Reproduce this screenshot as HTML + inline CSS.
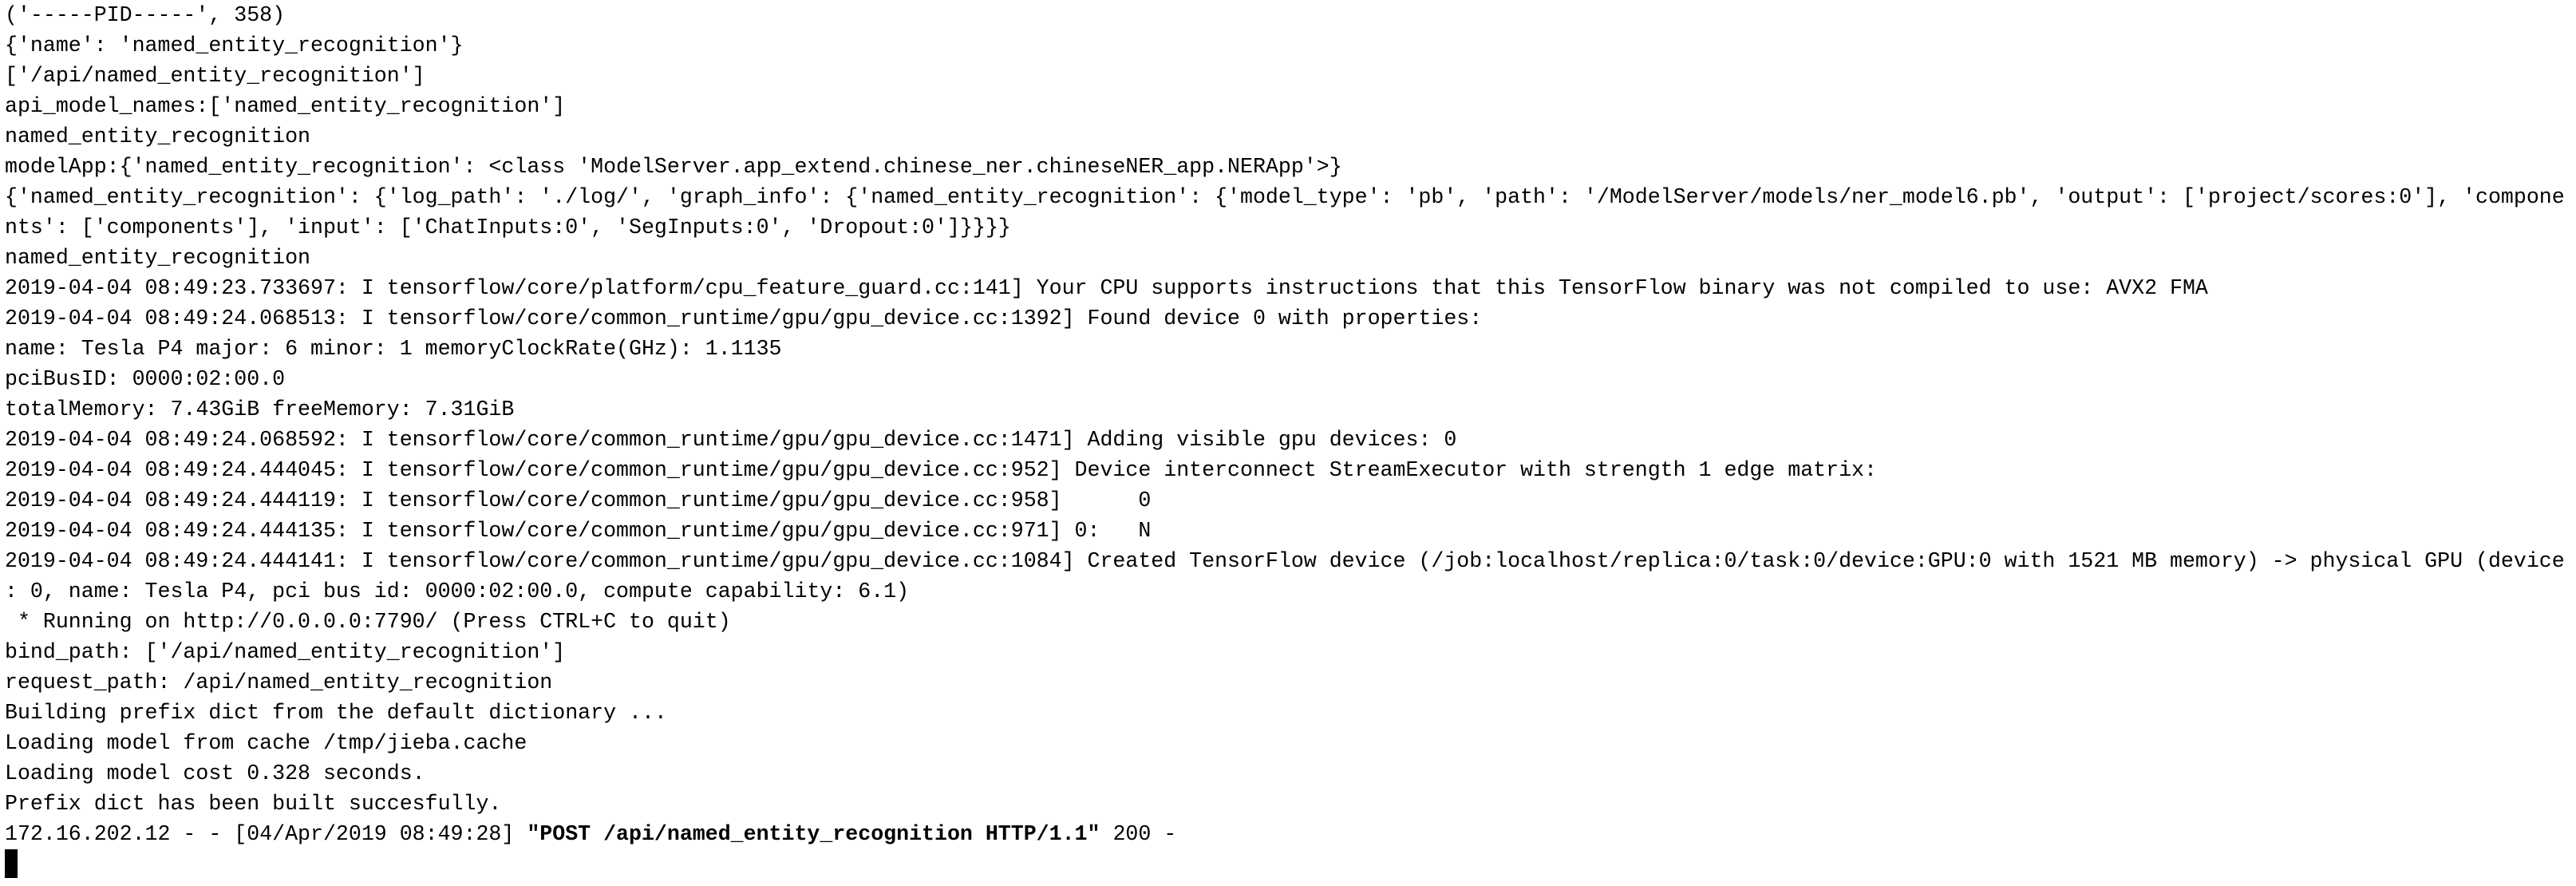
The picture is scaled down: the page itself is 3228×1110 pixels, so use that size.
<!DOCTYPE html>
<html><head><meta charset="utf-8"><style>
html,body{margin:0;padding:0;background:#fff;width:3228px;height:1110px;overflow:hidden}
pre{margin:0;padding:0 0 0 6px;font-family:"Liberation Mono",monospace;font-size:26.6px;line-height:38px;color:#000;white-space:pre}
b{font-weight:bold}
.cur{display:inline-block;width:16px;height:36px;background:#000;vertical-align:-9px}
</style></head><body><pre>('-----PID-----', 358)
{'name': 'named_entity_recognition'}
['/api/named_entity_recognition']
api_model_names:['named_entity_recognition']
named_entity_recognition
modelApp:{'named_entity_recognition': &lt;class 'ModelServer.app_extend.chinese_ner.chineseNER_app.NERApp'&gt;}
{'named_entity_recognition': {'log_path': './log/', 'graph_info': {'named_entity_recognition': {'model_type': 'pb', 'path': '/ModelServer/models/ner_model6.pb', 'output': ['project/scores:0'], 'compone
nts': ['components'], 'input': ['ChatInputs:0', 'SegInputs:0', 'Dropout:0']}}}}
named_entity_recognition
2019-04-04 08:49:23.733697: I tensorflow/core/platform/cpu_feature_guard.cc:141] Your CPU supports instructions that this TensorFlow binary was not compiled to use: AVX2 FMA
2019-04-04 08:49:24.068513: I tensorflow/core/common_runtime/gpu/gpu_device.cc:1392] Found device 0 with properties:
name: Tesla P4 major: 6 minor: 1 memoryClockRate(GHz): 1.1135
pciBusID: 0000:02:00.0
totalMemory: 7.43GiB freeMemory: 7.31GiB
2019-04-04 08:49:24.068592: I tensorflow/core/common_runtime/gpu/gpu_device.cc:1471] Adding visible gpu devices: 0
2019-04-04 08:49:24.444045: I tensorflow/core/common_runtime/gpu/gpu_device.cc:952] Device interconnect StreamExecutor with strength 1 edge matrix:
2019-04-04 08:49:24.444119: I tensorflow/core/common_runtime/gpu/gpu_device.cc:958]      0
2019-04-04 08:49:24.444135: I tensorflow/core/common_runtime/gpu/gpu_device.cc:971] 0:   N
2019-04-04 08:49:24.444141: I tensorflow/core/common_runtime/gpu/gpu_device.cc:1084] Created TensorFlow device (/job:localhost/replica:0/task:0/device:GPU:0 with 1521 MB memory) -&gt; physical GPU (device
: 0, name: Tesla P4, pci bus id: 0000:02:00.0, compute capability: 6.1)
 * Running on http://0.0.0.0:7790/ (Press CTRL+C to quit)
bind_path: ['/api/named_entity_recognition']
request_path: /api/named_entity_recognition
Building prefix dict from the default dictionary ...
Loading model from cache /tmp/jieba.cache
Loading model cost 0.328 seconds.
Prefix dict has been built succesfully.
172.16.202.12 - - [04/Apr/2019 08:49:28] <b>"POST /api/named_entity_recognition HTTP/1.1"</b> 200 -
<span class="cur"></span></pre></body></html>
